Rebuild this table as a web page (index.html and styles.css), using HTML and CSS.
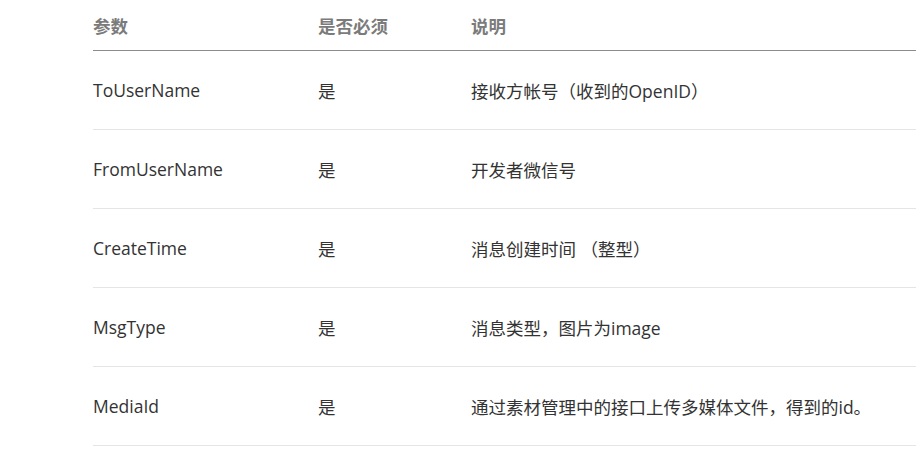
FILE: index.html
```html
<!DOCTYPE html>
<html lang="zh">
<head>
<meta charset="utf-8">
<link rel="stylesheet" href="styles.css">
</head>
<body>
<table class="params">
  <thead>
    <tr><th class="c1">参数</th><th class="c2">是否必须</th><th class="c3">说明</th></tr>
  </thead>
  <tbody>
    <tr><td>ToUserName</td><td>是</td><td>接收方帐号（收到的OpenID）</td></tr>
    <tr><td>FromUserName</td><td>是</td><td>开发者微信号</td></tr>
    <tr><td>CreateTime</td><td>是</td><td>消息创建时间 （整型）</td></tr>
    <tr><td>MsgType</td><td>是</td><td>消息类型，图片为image</td></tr>
    <tr><td>MediaId</td><td>是</td><td>通过素材管理中的接口上传多媒体文件，得到的id。</td></tr>
  </tbody>
</table>
</body>
</html>
```

FILE: styles.css
```css
html, body {
  margin: 0;
  padding: 0;
  background: #fff;
}
body {
  padding-left: 93px;
  font-family: "Open Sans", "Noto Sans CJK SC", sans-serif;
  font-size: 17.5px;
  color: #333;
}
.params {
  border-collapse: collapse;
  width: 823px;
  table-layout: fixed;
}
.params th {
  text-align: left;
  font-weight: bold;
  color: #7b7b7b;
  height: 50px;
  padding: 0;
  border-bottom: 1px solid #8c8c8c;
  vertical-align: middle;
}
.params .c1 { width: 225px; }
.params .c2 { width: 153px; }
.params td {
  height: 78px;
  padding: 0;
  border-bottom: 1px solid #e5e5e5;
  vertical-align: middle;
}
```
